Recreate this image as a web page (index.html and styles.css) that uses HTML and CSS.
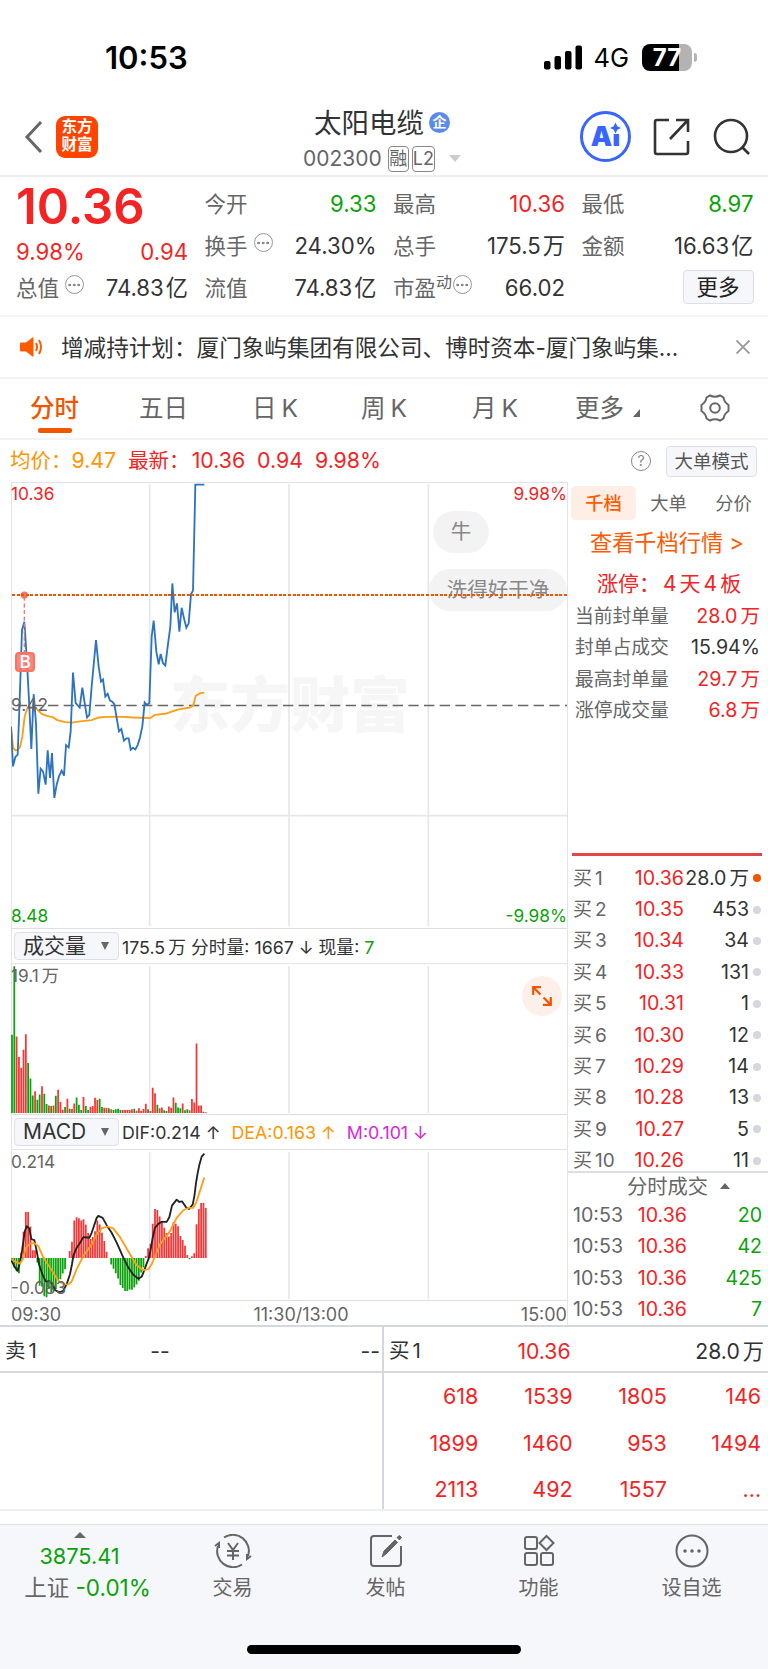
FILE: index.html
```html
<!DOCTYPE html>
<html lang="zh-CN">
<head>
    <meta charset="UTF-8">
    <meta name="viewport" content="width=device-width, initial-scale=1.0">
    <title>太阳电缆 002300</title>
    <link rel="stylesheet" href="styles.css">
    <script src="chart.js" defer></script>
</head>
<body>

    <!-- 状态栏 -->
    <div class="status">
        <span class="time">10:53</span>
        <div class="status-right">
            <svg width="39" height="25" viewBox="0 0 39 25"><rect x="0" y="16" width="6.5" height="8.5" rx="2"/><rect x="10.5" y="11" width="6.5" height="13.5" rx="2"/><rect x="21" y="6" width="6.5" height="18.5" rx="2"/><rect x="31.5" y="0.5" width="6.5" height="24" rx="2"/></svg>
            <span class="net">4G</span>
            <div class="battery"><span>77</span></div>
        </div>
    </div>

    <!-- 标题栏 -->
    <div class="header">
        <svg class="back" width="20" height="34" viewBox="0 0 20 34"><path d="M17 2L3 17L17 32"/></svg>
        <div class="logo"><p>东方</p><p>财富</p></div>
        <div class="title">
            <div class="name">太阳电缆<span class="qi">企</span></div>
            <div class="code">002300<span class="tag">融</span><span class="tag">L2</span><i class="down"></i></div>
        </div>
        <div class="ai">
            <span>Ai</span>
            <svg width="11" height="12" viewBox="0 0 10 10"><path d="M5 0L6.6 3.4L10 5L6.6 6.6L5 10L3.4 6.6L0 5L3.4 3.4Z"/></svg>
        </div>
        <svg class="share" width="38" height="38" viewBox="0 0 38 38"><path d="M16 2H4Q2 2 2 4V34Q2 36 4 36H33Q35 36 35 34V23M23 2H35V14M35 2L17 21"/></svg>
        <svg class="search" width="38" height="38" viewBox="0 0 38 38"><circle cx="18" cy="18" r="16"/><path d="M29 29L36 36"/></svg>
    </div>

    <!-- 行情 -->
    <div class="quote">
        <div class="col">
            <div class="price">10.36</div>
            <div class="cell red change"><span>9.98%</span><span>0.94</span></div>
            <div class="cell"><label>总值<i class="dots"></i></label><b>74.83<u>亿</u></b></div>
        </div>
        <div class="col">
            <div class="cell"><label>今开</label><b class="green">9.33</b></div>
            <div class="cell"><label>换手<i class="dots"></i></label><b>24.30%</b></div>
            <div class="cell"><label>流值</label><b>74.83<u>亿</u></b></div>
        </div>
        <div class="col">
            <div class="cell"><label>最高</label><b class="red">10.36</b></div>
            <div class="cell"><label>总手</label><b>175.5<u>万</u></b></div>
            <div class="cell"><label>市盈<sup>动</sup><i class="dots"></i></label><b>66.02</b></div>
        </div>
        <div class="col">
            <div class="cell"><label>最低</label><b class="green">8.97</b></div>
            <div class="cell"><label>金额</label><b>16.63<u>亿</u></b></div>
            <div class="cell end"><button class="more">更多</button></div>
        </div>
    </div>

    <!-- 公告 -->
    <div class="notice">
        <svg width="24" height="22" viewBox="0 0 24 22"><path d="M1 6.5H6L12.5 1.5Q13.5 1 13.5 2V20Q13.5 21 12.5 20.5L6 15.5H1Q0 15.5 0 14.5V7.5Q0 6.5 1 6.5Z" fill="#ff5a00"/><path d="M16 7Q18 11 16 15M19 4Q23 11 19 18" fill="none" stroke="#ff5a00" stroke-width="2"/></svg>
        <p>增减持计划：厦门象屿集团有限公司、博时资本-厦门象屿集...</p>
        <svg class="close" width="14" height="14" viewBox="0 0 14 14"><path d="M0.5 0.5L13.5 13.5M13.5 0.5L0.5 13.5"/></svg>
    </div>

    <!-- 周期切换 -->
    <div class="tabs">
        <span class="active">分时</span>
        <span>五日</span>
        <span>日<em>K</em></span>
        <span>周<em>K</em></span>
        <span>月<em>K</em></span>
        <span>更多<i class="corner"></i></span>
        <svg width="30" height="28" viewBox="0 0 30 28"><path d="M10 1.5Q15 4 20 1.5L23.5 3.5Q24 8 28.5 11V17Q24 20 23.5 24.5L20 26.5Q15 24 10 26.5L6.5 24.5Q6 20 1.5 17V11Q6 8 6.5 3.5Z"/><circle cx="15" cy="14" r="4.8"/></svg>
    </div>

    <div class="info">
        <span class="avg">均价：<b>9.47</b></span>
        <span class="red">最新：<b>10.36</b><b>0.94</b><b>9.98%</b></span>
        <i class="help">?</i>
        <button class="mode">大单模式</button>
    </div>

    <div class="main">
        <!-- 左侧图表 -->
        <div class="charts">
            <div class="chart price-chart">
                <div class="watermark">东方财富</div>
                <svg viewBox="33 38 1668 1338" preserveAspectRatio="none">
                    <path class="grid" d="M449 42V1370M867 42V1370M1285 42V1370M33 1038H1701"/>
                    <path class="base-line" d="M50 707H1701"/>
                    <polyline class="avg-line" points="33,770 39,833 46,842 53,840 60,832 67,800 74,740 81,718 88,712 102,713 110,717 125,732 140,738 158,742 172,751 195,757 220,758 240,755 275,751 297,743 320,741 370,741 400,743 450,745 465,735 500,731 530,720 545,717 570,713 580,706 587,678 600,670 613,668"/>
                    <polyline class="now-line" points="33,770 39,890 46,862 53,855 58,720 62,600 66,480 73,455 80,560 87,690 94,838 101,673 108,760 115,972 122,897 129,905 137,945 143,842 150,925 156,850 163,985 170,945 177,920 185,903 192,918 198,826 206,833 212,785 219,608 227,700 239,713 247,653 254,700 261,743 268,735 275,650 288,510 296,590 303,635 309,629 316,680 323,672 330,692 336,695 343,703 350,745 357,785 364,778 372,813 379,806 386,806 392,840 399,834 406,839 413,826 420,803 427,770 434,698 440,705 448,700 455,500 461,452 469,545 476,583 482,552 489,580 496,587 503,530 511,470 517,340 524,427 531,400 538,485 545,413 552,445 559,473 566,460 573,372 579,362 586,43 613,43"/>
                    <path class="buy-line" d="M73 380V550"/>
                    <circle cx="73" cy="375" r="11" fill="#fb7163"/>
                </svg>
                <span class="bubble b1">牛</span>
                <span class="bubble b2">洗得好干净</span>
                <div class="cost"></div>
                <span class="buy">B</span>
                <span class="tl red">10.36</span>
                <span class="tr red">9.98%</span>
                <span class="ml">9.42</span>
                <span class="bl green">8.48</span>
                <span class="br green">-9.98%</span>
            </div>

            <div class="bar">
                <span class="select">成交量<i></i></span>
                <span>175.5<u>万</u> 分时量: 1667 ↓ 现量: <b class="green">7</b></span>
            </div>
            <div class="chart sub">
                <span class="tl">19.1<u>万</u></span>
                <svg viewBox="33 128 1668 453" preserveAspectRatio="none">
                    <path class="grid" d="M449 135V578M867 135V578M1285 135V578"/>
                    <path id="volUp" class="up"/>
                    <path id="volDown" class="fall"/>
                </svg>
                <span class="expand">
                    <svg width="20" height="20" viewBox="0 0 20 20"><path d="M1.2 9V1.2H9M1.5 1.5L8.5 8.5M18.8 11V18.8H11M18.5 18.5L11.5 11.5"/></svg>
                </span>
            </div>

            <div class="bar">
                <span class="select">MACD<i></i></span>
                <span class="macd-text">DIF:0.214 ↑</span>
                <span class="avg macd-text">DEA:0.163 ↑</span>
                <span class="purple">M:0.101 ↓</span>
            </div>
            <div class="chart sub">
                <svg viewBox="33 115 1668 453" preserveAspectRatio="none">
                    <path class="grid" d="M449 122V566M867 122V566M1285 122V566"/>
                    <path id="macdUp" class="up"/>
                    <path id="macdDown" class="fall"/>
                    <polyline class="dif" points="33,446 44,468 53,480 60,455 66,420 74,362 80,345 88,352 94,384 103,387 110,420 117,460 127,490 137,512 150,512 158,520 165,538 178,545 190,540 200,520 210,490 216,460 220,435 230,410 240,396 250,378 268,380 275,365 285,335 290,320 295,314 308,320 320,342 335,365 350,395 370,440 385,470 400,492 415,504 425,498 432,480 440,458 447,440 452,415 458,380 465,350 475,338 485,332 500,332 508,318 516,283 530,265 538,272 546,270 558,288 567,293 578,280 583,255 588,215 593,185 598,160 605,135 613,126"/>
                    <polyline class="avg-line" points="33,444 45,452 60,458 68,445 78,410 90,398 102,396 115,405 130,440 150,470 175,510 190,520 205,521 215,512 230,475 250,435 275,400 290,370 305,352 322,346 340,352 360,378 390,430 410,463 430,478 445,475 455,460 480,400 510,360 530,320 550,297 565,290 580,290 590,270 602,232 613,198"/>
                </svg>
                <span class="tl">0.214</span>
                <span class="bl">-0.083</span>
            </div>
            <div class="axis"><span>09:30</span><span class="noon">11:30/13:00</span><span>15:00</span></div>
        </div>

        <!-- 右侧盘口 -->
        <div class="side">
            <div class="side-tabs"><span class="active">千档</span><span>大单</span><span>分价</span></div>
            <div class="link">查看千档行情 &gt;</div>
            <div class="limit red">涨停：<u>4</u>天<u>4</u>板</div>
            <div class="stat"><span>当前封单量</span><b class="red">28.0<u>万</u></b></div>
            <div class="stat"><span>封单占成交</span><b>15.94%</b></div>
            <div class="stat"><span>最高封单量</span><b class="red">29.7<u>万</u></b></div>
            <div class="stat"><span>涨停成交量</span><b class="red">6.8<u>万</u></b></div>
            <div class="orders">
                <div class="order hot"><span>买<u>1</u></span><em>10.36</em><b>28.0<u>万</u></b><i></i></div>
                <div class="order"><span>买<u>2</u></span><em>10.35</em><b>453</b><i></i></div>
                <div class="order"><span>买<u>3</u></span><em>10.34</em><b>34</b><i></i></div>
                <div class="order"><span>买<u>4</u></span><em>10.33</em><b>131</b><i></i></div>
                <div class="order"><span>买<u>5</u></span><em>10.31</em><b>1</b><i></i></div>
                <div class="order"><span>买<u>6</u></span><em>10.30</em><b>12</b><i></i></div>
                <div class="order"><span>买<u>7</u></span><em>10.29</em><b>14</b><i></i></div>
                <div class="order"><span>买<u>8</u></span><em>10.28</em><b>13</b><i></i></div>
                <div class="order"><span>买<u>9</u></span><em>10.27</em><b>5</b><i></i></div>
                <div class="order"><span>买<u>10</u></span><em>10.26</em><b>11</b><i></i></div>
            </div>
            <div class="deal-title">分时成交<i></i></div>
            <div class="deal"><span>10:53</span><em>10.36</em><b>20</b></div>
            <div class="deal"><span>10:53</span><em>10.36</em><b>42</b></div>
            <div class="deal"><span>10:53</span><em>10.36</em><b>425</b></div>
            <div class="deal"><span>10:53</span><em>10.36</em><b>7</b></div>
        </div>
    </div>

    <!-- 买卖队列 -->
    <div class="queue">
        <div class="half">
            <div class="queue-head"><span>卖<u>1</u></span><em>--</em><b>--</b></div>
        </div>
        <div class="half buy-half">
            <div class="queue-head"><span>买<u>1</u></span><em class="red">10.36</em><b>28.0<u>万</u></b></div>
            <div class="queue-list">
                <span>618</span><span>1539</span><span>1805</span><span>146</span>
                <span>1899</span><span>1460</span><span>953</span><span>1494</span>
                <span>2113</span><span>492</span><span>1557</span><span>...</span>
            </div>
        </div>
    </div>

    <!-- 底部菜单 -->
    <div class="footer">
        <div class="menu">
            <div class="index">
                <i></i>
                <span class="green">3875.41</span>
                <p>上证 <span class="green">-0.01%</span></p>
            </div>
            <div class="item">
                <svg width="38" height="34" viewBox="0 0 38 34"><path d="M10 3.5A16 16 0 0 1 34 22M28 30.5A16 16 0 0 1 4 12M1 12L5 9V14M37 22L33 25V20M14 9L19 16L24 9M19 16V26M13 17H25M13 21.5H25"/></svg>
                <p>交易</p>
            </div>
            <div class="item">
                <svg width="34" height="34" viewBox="0 0 34 34"><path d="M23 2H5Q2 2 2 5V29Q2 32 5 32H29Q32 32 32 29V12"/><path d="M13 23L15 17L26 6L28.5 8.5L17 20ZM28 3.5L30.5 1.5L32.5 3.5L30.5 6Z" fill="#656565" stroke-width="1"/></svg>
                <p>发帖</p>
            </div>
            <div class="item">
                <svg width="32" height="32" viewBox="0 0 32 32"><rect x="2" y="2" width="12" height="12" rx="2"/><path d="M23.5 1L30.5 8L23.5 15L16.5 8Z"/><rect x="2" y="18" width="12" height="12" rx="2"/><rect x="18" y="18" width="12" height="12" rx="2"/></svg>
                <p>功能</p>
            </div>
            <div class="item">
                <svg width="34" height="34" viewBox="0 0 34 34"><circle cx="17" cy="17" r="15.5"/><path class="round" d="M10 17h.01M17 17h.01M24 17h.01"/></svg>
                <p>设自选</p>
            </div>
        </div>
        <div class="home"></div>
    </div>

</body>
</html>
```

FILE: chart.js
```js
// 每分钟一根柱子: 正数为红, 负数为绿
var step = 6.92;

var volume = [-236, -443, 231, 169, 137, 191, 238, -151, -104, -53, 66, -40, -56, 81, -58, -27, 23, -21, 23, -52,
    70, 33, 10, -18, 43, -13, 12, 29, -47, -25, -9, 48, -21, -9, 19, 21, 46, 39, -43, -18,
    16, 15, -14, 11, -9, -11, -13, -9, 9, 9, 9, 9, 11, -13, 7, 14, 7, 12, 28, -11,
    6, 76, 60, -25, 14, 17, -8, -6, 20, 16, 47, -31, -17, -14, 29, -8, -11, 8, 42, 32,
    210, 23, 23, 4, 2];

var macd = [-7, -29, -40, -46, 16, 79, 139, 139, 95, 23, 23, -14, -84, -86, -116, -119, -94, -104, -99, -94,
    -69, -64, -47, -34, 0, 21, 49, 113, 123, 120, 113, 117, 101, 75, 57, 63, 81, 113, 101, 76,
    51, 19, 0, -20, -33, -46, -62, -82, -91, -100, -100, -95, -96, -89, -80, -69, -44, -29, 6, 29,
    43, 103, 148, 145, 125, 111, 91, 75, 65, 75, 108, 103, 96, 66, 54, 37, 9, -4, 5, 14,
    102, 148, 166, 166, 151];

// 成交量都从底部向上画, MACD 的绿柱向下画
function drawBars(data, base, upId, downId, flip) {
    var up = "";
    var down = "";
    data.forEach(function (v, i) {
        if (v === 0) return;
        var h = flip ? v : Math.abs(v);
        var d = "M" + (36 + i * step).toFixed(1) + " " + base + "V" + (base - h);
        if (v > 0) up += d;
        else down += d;
    });
    document.getElementById(upId).setAttribute("d", up);
    document.getElementById(downId).setAttribute("d", down);
}

drawBars(volume, 578, "volUp", "volDown", false);
drawBars(macd, 441, "macdUp", "macdDown", true);
```

FILE: styles.css
```css
* {
    box-sizing: border-box;
}

body {
    margin: 0;
    width: 768px;
    font-family: Inter, "Noto Sans CJK SC", sans-serif;
    font-size: 22.2px;
    color: #333;
    background: #fff;
}

b, em, i, u {
    font-weight: normal;
    font-style: normal;
    text-decoration: none;
}

u { margin-left: 3px; }

p { margin: 0; }

svg {
    display: block;
    fill: none;
}

button {
    font-family: inherit;
    padding: 0;
    border: 1px solid #dcdfe6;
    border-radius: 4px;
    background: #f6f7fa;
}

.red { color: #f52323; }
.green { color: #0aa30a; }
.avg { color: #ff9500; }
.purple { color: #d926d9; }

/* 状态栏 */
.status {
    display: flex;
    justify-content: space-between;
    align-items: center;
    height: 96px;
    padding: 18px 72px 0 105px;
    color: #000;
}

.time {
    font-size: 31px;
    font-weight: 600;
}

.status-right {
    display: flex;
    align-items: center;
}

.status-right svg { fill: #000; }

.net {
    margin: 0 13px 0 11px;
    font-size: 25.5px;
}

.battery {
    position: relative;
    width: 50px;
    height: 27px;
    margin-right: 4px;
    border-radius: 8px;
    background: linear-gradient(90deg, #000 75%, #b3b3b3 75%);
    color: #fff;
    font-size: 24px;
    font-weight: 700;
    line-height: 27px;
    text-align: center;
}

.battery::after {
    content: "";
    position: absolute;
    right: -5px;
    top: 9px;
    width: 3px;
    height: 9px;
    border-radius: 0 3px 3px 0;
    background: #b3b3b3;
}

/* 标题栏 */
.header {
    display: flex;
    align-items: center;
    height: 81px;
    padding: 2px 17px 0 24px;
    border-bottom: 2px solid #eee;
}

.back {
    stroke: #666;
    stroke-width: 3;
}

.logo {
    width: 42px;
    height: 42px;
    margin-left: 12px;
    padding-top: 2px;
    border-radius: 9px;
    background: #ff4400;
    color: #fff;
    font-size: 15.5px;
    font-weight: 700;
    line-height: 18px;
    text-align: center;
}

.title {
    width: 156px;
    margin-left: 207px;
    padding-top: 8px;
    white-space: nowrap;
}

.name {
    display: flex;
    align-items: center;
    height: 36px;
    padding-left: 9px;
    font-size: 27.5px;
    line-height: 36px;
}

.qi {
    width: 21px;
    height: 21px;
    margin-left: 5px;
    border-radius: 50%;
    background: #5b8bea;
    color: #fff;
    font-size: 14px;
    font-weight: 700;
    line-height: 20px;
    text-align: center;
}

.code {
    display: flex;
    align-items: center;
    height: 36px;
    margin-left: -2px;
    color: #666;
    font-size: 21px;
}

.tag {
    width: 24px;
    height: 26px;
    margin-left: 3px;
    border: 1px solid #888;
    border-radius: 4px;
    font-size: 18px;
    line-height: 23px;
    text-align: center;
}

.tag:first-of-type { margin-left: 6px; }

.down {
    margin-left: 14px;
    border: 6px solid transparent;
    border-top: 7px solid #ccc;
    border-bottom: 0;
}

.ai {
    position: relative;
    width: 51px;
    height: 51px;
    margin-left: 119px;
    border: 3px solid #3666ff;
    border-radius: 50%;
    color: #3666ff;
    font-size: 27px;
    font-weight: 900;
    line-height: 46px;
    text-align: center;
}

.ai svg {
    position: absolute;
    right: 7px;
    top: 8px;
    fill: #3666ff;
    background: #fff;
}

.share, .search {
    stroke: #333;
    stroke-width: 2.6;
}

.share { margin-left: 22px; }
.search { margin-left: 22px; }

/* 行情 */
.quote {
    display: grid;
    grid-template-columns: repeat(4, 172px);
    gap: 16.5px;
    height: 140px;
    padding: 6px 16px 0;
    border-bottom: 2px solid #f3f3f5;
}

.price {
    height: 48px;
    color: #f52323;
    font-size: 49px;
    font-weight: 600;
    line-height: 48px;
}

.cell {
    display: flex;
    justify-content: space-between;
    align-items: center;
    height: 42px;
    line-height: 42px;
    white-space: nowrap;
}

.cell u { margin-left: 2px; }

.cell.change {
    height: 36px;
    padding-top: 6px;
}

.cell label {
    display: flex;
    color: #666;
    font-size: 21.5px;
}

.cell sup {
    font-size: 16px;
    line-height: 30px;
}

.cell.end { justify-content: flex-end; }

.dots {
    width: 19px;
    height: 19px;
    margin: 8px 0 0 6px;
    border: 1.5px solid #999;
    border-radius: 50%;
    background: radial-gradient(circle, #888 1.2px, transparent 1.6px) center / 4.5px 16px repeat-x content-box;
    padding: 0 1.3px;
}

sup + .dots { margin-left: 1px; }

.more {
    width: 71px;
    height: 34px;
    margin-top: -3px;
    color: #222;
    font-size: 21.5px;
    line-height: 30px;
}

/* 公告 */
.notice {
    display: flex;
    align-items: center;
    height: 62px;
    padding: 0 18px 0 20px;
    border-bottom: 2px solid #f3f3f5;
}

.notice p {
    flex: 1;
    margin: -2px 0 0 17px;
    font-size: 22.6px;
    white-space: nowrap;
}

.close {
    stroke: #999;
    stroke-width: 1.8;
}

/* 周期切换 */
.tabs {
    display: flex;
    height: 61px;
    padding-left: 30px;
    border-bottom: 2px solid #f3f3f5;
    color: #666;
    font-size: 24.5px;
    line-height: 58px;
}

.tabs span {
    position: relative;
    margin-right: 60px;
    white-space: nowrap;
}

.tabs span:nth-child(2) { margin-right: 64px; }
.tabs span:nth-child(3) { margin-right: 63px; }
.tabs span:nth-child(4) { margin-right: 65px; }
.tabs span:nth-child(5) { margin-right: 57px; }
.tabs em { margin-left: 5px; }

.tabs .active {
    color: #f25500;
    font-weight: 500;
}

.tabs .active::after {
    content: "";
    position: absolute;
    left: 8px;
    bottom: 5px;
    width: 34px;
    height: 5px;
    border-radius: 2px;
    background: #f25500;
}

.corner {
    display: inline-block;
    margin-left: 9px;
    border-left: 7px solid transparent;
    border-bottom: 8px solid #666;
}

.tabs svg {
    margin-top: 15px;
    stroke: #666;
    stroke-width: 2;
}

.info {
    display: flex;
    align-items: center;
    height: 42px;
    padding: 0 11px 0 10px;
    font-size: 20.5px;
    white-space: nowrap;
}

.info > span { margin-top: -4px; }
.info b { margin-right: 12px; font-size: 21.3px; }
.info .red b:first-child { margin-left: 2px; }

.help {
    width: 20px;
    height: 20px;
    margin-left: auto;
    border: 1.5px solid #888;
    border-radius: 50%;
    color: #888;
    font-size: 14px;
    line-height: 17px;
    text-align: center;
}

.mode {
    width: 91px;
    height: 31px;
    margin-left: 15px;
    color: #555;
    font-size: 18.5px;
    line-height: 28px;
}

/* 图表 */
.main {
    display: flex;
    height: 845px;
    border-bottom: 2px solid #d5d7de;
}

.charts {
    width: 568px;
    padding-left: 11px;
    border-right: 1px solid #e2e4ea;
}

.chart {
    position: relative;
    border-top: 1px solid #e2e4ea;
    border-left: 1px solid #e2e4ea;
    border-bottom: 1.5px solid #dcdee5;
    color: #666;
    font-size: 17.3px;
    line-height: 20px;
}

.chart > svg {
    width: 556px;
    height: 100%;
    margin-left: -1px;
}

.price-chart { height: 447px; }
.sub { height: 152px; }

.chart > span { position: absolute; }
.tl { left: -1px; top: 1px; }
.tr { right: 0; top: 1px; }
.ml { left: -1px; top: 212px; }
.bl { left: -1px; bottom: 2px; }
.br { right: 0; bottom: 2px; }
.sub .tl { top: 2px; }

.grid { stroke: #e6e8f0; stroke-width: 5; }
.base-line { stroke: #666; stroke-width: 5; stroke-dasharray: 31 16; }
.avg-line { stroke: #ff9d14; stroke-width: 5.5; stroke-linejoin: round; }
.now-line { stroke: #2d73c2; stroke-width: 5.5; }
.buy-line { stroke: #fb7163; stroke-width: 4; stroke-dasharray: 12 8; }
.up { stroke: #f83535; stroke-width: 5.3; }
.fall { stroke: #0ba30b; stroke-width: 5.3; }
.dif { stroke: #222; stroke-width: 5.5; stroke-linejoin: round; }

.watermark {
    position: absolute;
    left: 158px;
    top: 182px;
    color: #f6f6f6;
    font-size: 60px;
    font-weight: 900;
    line-height: 80px;
}

.price-chart > svg { position: relative; }

.cost {
    position: absolute;
    left: 0;
    right: 0;
    top: 111px;
    height: 2px;
    background: repeating-linear-gradient(90deg, #f25500 0 3px, transparent 3px 4.6px);
}

.chart > .buy {
    left: 3px;
    top: 169px;
    width: 20px;
    height: 20px;
    border: 2px solid #fb7163;
    border-radius: 4px;
    background: rgba(251, 113, 99, 0.85);
    color: #fff;
    font-size: 17px;
    font-weight: 600;
    line-height: 17px;
    text-align: center;
}

.bubble {
    height: 42px;
    border-radius: 21px;
    background: #f3f3f3;
    color: #888;
    font-size: 20.5px;
    line-height: 41px;
    text-align: center;
}

.b1 { left: 421px; top: 28px; width: 56px; }
.b2 { left: 417px; top: 86px; width: 138px; }

.expand {
    right: 5px;
    top: 12px;
    width: 40px;
    height: 40px;
    padding: 10px;
    border-radius: 50%;
    background: #fdf0ea;
}

.expand svg {
    stroke: #f25500;
    stroke-width: 2.2;
}

.bar {
    display: flex;
    align-items: center;
    height: 34px;
    padding-left: 2px;
    border-left: 1px solid #e2e4ea;
    font-size: 17.8px;
    white-space: nowrap;
}

.select {
    display: flex;
    justify-content: space-between;
    align-items: center;
    width: 105px;
    height: 28px;
    margin-right: 3px;
    padding: 0 9px 0 8px;
    border: 1px solid #dcdfe6;
    border-radius: 4px;
    background: #f6f7fa;
    font-size: 21px;
    line-height: 26px;
}

.select i {
    border: 4.5px solid transparent;
    border-top: 8px solid #666;
    border-bottom: 0;
}

.macd-text { margin-right: 11px; }

.axis {
    display: flex;
    justify-content: space-between;
    height: 26px;
    color: #666;
    font-size: 18px;
    line-height: 27px;
}

.noon { margin-left: 20px; }

/* 盘口 */
.side {
    width: 200px;
    padding-top: 4px;
    font-size: 19.6px;
    white-space: nowrap;
}

.side-tabs {
    display: flex;
    padding-left: 3px;
    color: #666;
    font-size: 18.3px;
    line-height: 34px;
    text-align: center;
}

.side-tabs span { width: 65px; }

.side-tabs .active {
    border-radius: 5px;
    background: #feeee6;
    color: #ff5a00;
    font-weight: 500;
}

.link {
    height: 46px;
    padding-left: 22px;
    color: #ff5a00;
    font-size: 22.2px;
    line-height: 46px;
}

.limit {
    height: 35px;
    padding-left: 29px;
    font-size: 21px;
    line-height: 36px;
}

.limit u { margin-right: 3px; }

.stat {
    display: flex;
    justify-content: space-between;
    height: 31.4px;
    padding: 0 8px 0 7px;
    line-height: 31.4px;
}

.stat span { color: #666; font-size: 18.8px; }

.orders {
    height: 320px;
    margin-top: 126px;
    overflow: hidden;
    border-bottom: 2px solid #dcdee5;
}

.orders::before {
    content: "";
    display: block;
    width: 190px;
    height: 3px;
    margin: 0 0 7px 4px;
    background: #e64545;
}

.order {
    display: grid;
    grid-template-columns: 48px 63px 1fr 15px;
    align-items: center;
    height: 31.4px;
    padding: 0 4px 0 5px;
    line-height: 31.4px;
}

.order span { font-size: 19px; }
.order span, .deal span { color: #666; }
.order em, .deal em { color: #f52323; text-align: right; }
.order b, .deal b { text-align: right; }

.order i {
    width: 8px;
    height: 8px;
    margin-left: 4px;
    border-radius: 50%;
    background: #d5d7de;
}

.order b { margin-left: -10px; }
.order.hot i { background: #f25500; }

.deal-title {
    display: flex;
    align-items: center;
    height: 27px;
    padding-left: 59px;
    color: #666;
    font-size: 20.3px;
    line-height: 27px;
}

.deal-title i, .index i {
    margin-left: 12px;
    border: 5px solid transparent;
    border-top: 0;
    border-bottom: 6px solid #666;
}

.deal {
    display: grid;
    grid-template-columns: 52px 62px 1fr;
    height: 31.6px;
    padding: 0 6px 0 5px;
    line-height: 31.6px;
}

.deal b { color: #0aa30a; }

/* 买卖队列 */
.queue {
    display: flex;
    height: 184px;
    border-bottom: 2px solid #eeeff2;
    font-size: 21.2px;
}

.half { width: 384px; }

.buy-half { border-left: 2px solid #d5d7de; margin-left: -2px; width: 386px; }

.queue-head {
    display: grid;
    grid-template-columns: 108px 94px 1fr;
    height: 46px;
    padding: 0 4px 0 5px;
    border-bottom: 2px solid #d5d7de;
    line-height: 48px;
    text-align: center;
}

.queue-head span { text-align: left; font-size: 20.5px; }
.queue-head b { text-align: right; }

.queue-list {
    display: grid;
    grid-template-columns: repeat(4, 94.3px);
    color: #f52323;
    font-size: 21.5px;
    line-height: 46.5px;
    text-align: right;
}

/* 底部菜单 */
.footer {
    height: 145px;
    margin-top: 13px;
    border-top: 1px solid #dfe1e6;
    background: #f6f7fa;
    color: #666;
}

.menu {
    display: flex;
    height: 120px;
    padding-left: 3px;
    text-align: center;
}

.index {
    display: flex;
    flex-direction: column;
    align-items: center;
    width: 153px;
    padding-top: 7px;
    line-height: 31px;
    font-size: 21.7px;
}

.index p {
    margin-left: 16px;
    font-size: 22.5px;
}

.index i { margin: 0 0 3px; border-width: 0 6px 6px; }

.item {
    display: flex;
    flex-direction: column;
    align-items: center;
    width: 153px;
    padding-top: 9px;
    font-size: 20px;
    line-height: 30px;
}

.item svg {
    height: 34px;
    margin-bottom: 5px;
    stroke: #656565;
    stroke-width: 2;
}

.item .round {
    stroke-width: 3.5;
    stroke-linecap: round;
}

.home {
    width: 274px;
    height: 9px;
    margin: 0 auto;
    border-radius: 5px;
    background: #000;
}
```
